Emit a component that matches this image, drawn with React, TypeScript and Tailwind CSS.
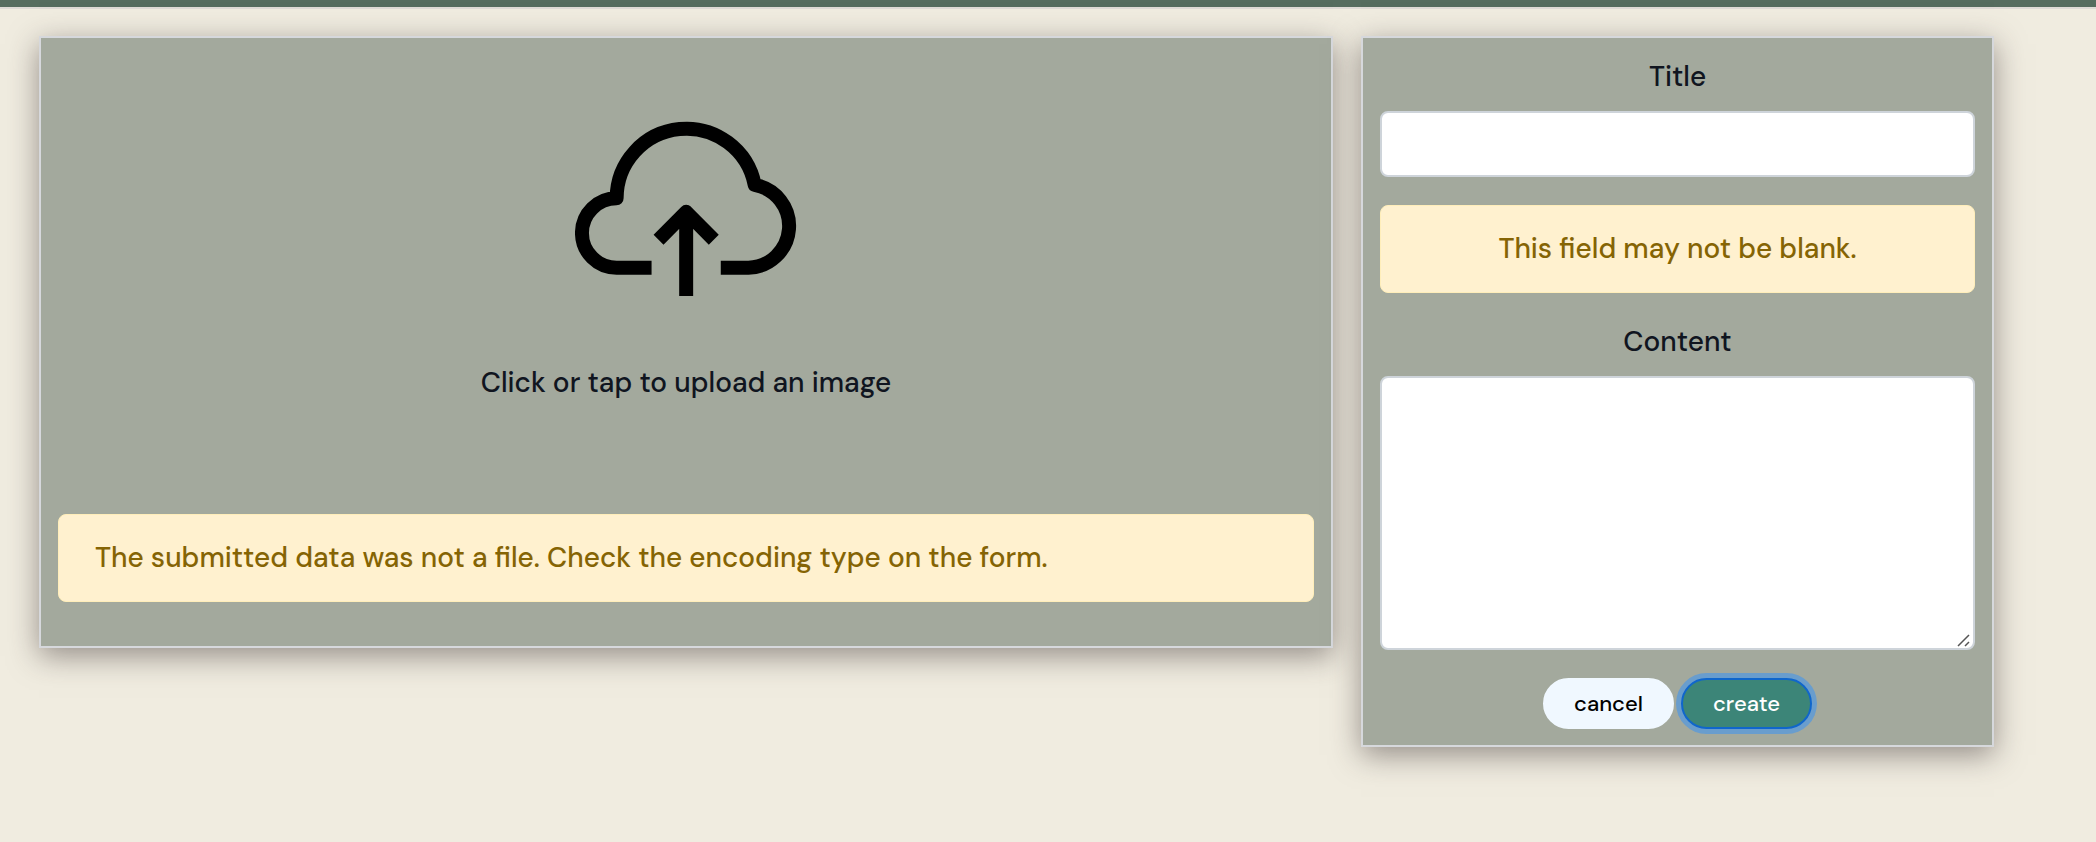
import type { ReactNode } from "react";

function Alert({ children, className = "" }: { children: ReactNode; className?: string }) {
  return (
    <div
      role="alert"
      className={`rounded-lg border border-[#ffeeba] bg-[#fff1cf] px-9 py-[22px] text-[#856404] ${className}`}
    >
      {children}
    </div>
  );
}

function UploadIcon() {
  return (
    <svg
      viewBox="105 93 667 526"
      className="h-[175px] w-[222px]"
      fill="none"
      stroke="#000"
      strokeWidth="42"
      strokeLinejoin="round"
      aria-hidden="true"
    >
      <path d="M335 534H230A104.250 104.250 0 0 1 230 325.500A209.500 209.500 0 0 1 645 285A125.500 125.500 0 0 1 626 534H543" />
      <path d="M439 619V367M356 450L439 366L522 450" />
    </svg>
  );
}

function ResizeGrip() {
  return (
    <svg
      viewBox="0 0 14 13"
      className="pointer-events-none absolute right-1 bottom-[3px] h-[13px] w-[14px]"
      fill="none"
      stroke="#555"
      strokeWidth="1.500"
      aria-hidden="true"
    >
      <path d="M1 12L12 1M8 12L12 8" />
    </svg>
  );
}

const card =
  "border-2 border-[#d6d8dc] bg-[#a3a99d] px-[17px] shadow-[0_8px_28px_rgba(60,50,50,0.5)]";
const field = "block w-full rounded-lg border-2 border-[#ced4da] bg-white px-6 outline-none";
const pill = "h-[51px] w-[131px] rounded-full border-2 text-[22px] font-medium";

export default function App() {
  return (
    <div className="min-h-screen bg-[#f0ece0] font-['DM_Sans','Inter',sans-serif] text-[28px] leading-[42px] font-medium text-[#10151f]">
      <header className="h-[9px] border-b-2 border-[#dfdbd6] bg-[#566d5f]" />
      <main className="pt-[27px] pr-[102px] pb-10 pl-[39px]">
        <form
          className="grid grid-cols-3 items-start gap-7"
          onSubmit={(event) => event.preventDefault()}
        >
          <section className={`col-span-2 pb-11 ${card}`}>
            <label
              htmlFor="image-upload"
              className="flex cursor-pointer flex-col items-center pt-[83px] pb-[110px]"
            >
              <UploadIcon />
              <span className="mt-[66px]">Click or tap to upload an image</span>
            </label>
            <input id="image-upload" type="file" accept="image/*" className="sr-only" />
            <Alert>The submitted data was not a file. Check the encoding type on the form.</Alert>
          </section>

          <section className={`pt-[18px] pb-4 text-center ${card}`}>
            <label htmlFor="title" className="mb-[13px] block">
              Title
            </label>
            <input id="title" name="title" type="text" className={`h-[66px] ${field}`} />
            <Alert className="mt-7">This field may not be blank.</Alert>
            <label htmlFor="content" className="mt-7 mb-[13px] block">
              Content
            </label>
            <div className="relative">
              <textarea
                id="content"
                name="content"
                className={`h-[274px] resize-none py-3 ${field}`}
              />
              <ResizeGrip />
            </div>
            <div className="mt-7 flex justify-center gap-[7px]">
              <button type="button" className={`border-[#f0f8ff] bg-[#f0f8ff] text-black ${pill}`}>
                cancel
              </button>
              <button
                type="submit"
                className={`border-[#0f66cc] bg-[#3c8578] text-white shadow-[0_0_0_5px_#699dcd] ${pill}`}
              >
                create
              </button>
            </div>
          </section>
        </form>
      </main>
    </div>
  );
}
